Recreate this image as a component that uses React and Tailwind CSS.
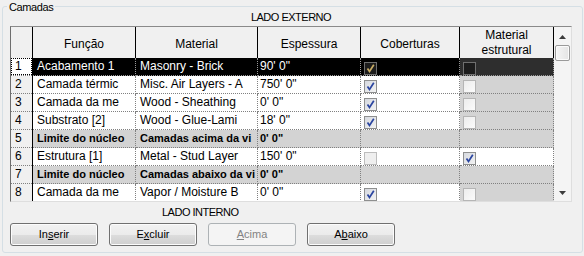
const rows = [
  { n: 1, fn: "Acabamento 1", mat: "Masonry - Brick", esp: `90' 0"`, cob: true, est: false, kind: "sel" },
  { n: 2, fn: "Camada térmic", mat: "Misc. Air Layers - A", esp: `750' 0"`, cob: true, est: false },
  { n: 3, fn: "Camada da me", mat: "Wood - Sheathing", esp: `0' 0"`, cob: true, est: false },
  { n: 4, fn: "Substrato [2]", mat: "Wood - Glue-Lami", esp: `18' 0"`, cob: true, est: false },
  { n: 5, fn: "Limite do núcleo", mat: "Camadas acima da vi", esp: `0' 0"`, kind: "core" },
  { n: 6, fn: "Estrutura [1]", mat: "Metal - Stud Layer", esp: `150' 0"`, cob: false, est: true, kind: "struct" },
  { n: 7, fn: "Limite do núcleo", mat: "Camadas abaixo da vi", esp: `0' 0"`, kind: "core" },
  { n: 8, fn: "Camada da me", mat: "Vapor / Moisture B", esp: `0' 0"`, cob: true, est: false },
];

function Check({ on, look }) {
  // look: normal | dim | sel
  const box =
    look === "sel"
      ? "border-[#6f6f6f] bg-[#1c1c1c]"
      : look === "dim"
      ? "border-[#bdbdbd] bg-[#efefef]"
      : on
      ? "border-[#8e8f8f] bg-[linear-gradient(135deg,#d6d9df,#f3f3f3)]"
      : "border-[#b5b5b5] bg-[linear-gradient(135deg,#ececec,#fbfbfb)]";
  return (
    <div className={`w-[13px] h-[13px] border ${box} flex items-center justify-center`}>
      {on && (
        <svg width="11" height="11" viewBox="0 0 11 11">
          <path d="M2.5 5.5 L4.5 8.5 L8.8 1.8" fill="none"
            stroke={look === "sel" ? "#c9ad66" : "#2a45a0"} strokeWidth="1.7" />
        </svg>
      )}
    </div>
  );
}

function Row({ r }) {
  const sel = r.kind === "sel";
  const core = r.kind === "core";
  const line = sel ? "border-[#9a9a9a]" : "border-[#808080]";
  const base = `h-[18px] border-r border-b border-dotted ${line} overflow-hidden whitespace-nowrap`;
  const cell = sel ? "bg-black text-white" : core ? "bg-[#d3d3d3]" : "bg-white";
  const txt = core ? "text-[11px] font-bold leading-[17px]" : "text-[12px] leading-[17px]";
  const estBg = sel ? "bg-[#2e2e2e]" : r.kind === "struct" ? "bg-white" : "bg-[#d3d3d3]";

  return (
    <div className="flex">
      <div className="w-[22px] border-r border-black flex">
        <div className={`flex-1 h-[18px] border-b border-dotted border-[#808080] ${sel ? "bg-white" : "bg-[#f0f0f0]"}`}>
          {sel ? (
            <div className="h-[17px] border border-dotted border-black pl-[3px] text-[12px] leading-[15px]">{r.n}</div>
          ) : (
            <div className="pl-[4px] text-[12px] leading-[17px]">{r.n}</div>
          )}
        </div>
      </div>
      <div className={`w-[103px] pl-[4px] ${base} ${cell} ${txt}`}>{r.fn}</div>
      <div className={`w-[122px] pl-[4px] ${base} ${cell} ${txt}`}>{r.mat}</div>
      <div className={`w-[103px] pl-[2px] ${base} ${cell} ${txt}`}>{r.esp}</div>
      <div className={`w-[99px] pl-[3px] pt-[4px] ${base} ${cell}`}>
        {!core && <Check on={r.cob} look={sel ? "sel" : r.cob ? "normal" : "dim"} />}
      </div>
      <div className={`w-[94px] pl-[3px] pt-[4px] ${base} ${core ? "bg-[#d3d3d3]" : estBg}`}>
        {!core && <Check on={r.est} look={sel ? "sel" : "normal"} />}
      </div>
    </div>
  );
}

function Btn({ children, disabled }) {
  return (
    <button
      className={`w-[88px] h-[23px] rounded-[3px] border text-[11px] leading-[13px] ${
        disabled
          ? "border-[#adb2b5] bg-[#f4f4f4] text-[#838383]"
          : "border-[#707070] bg-[linear-gradient(#f2f2f2,#ebebeb_50%,#dddddd_50%,#cfcfcf)] shadow-[inset_0_0_0_1px_#fcfcfc] text-black"
      }`}
    >
      {children}
    </button>
  );
}

export default function App() {
  return (
    <div className="w-[584px] h-[256px] bg-[#f0f0f0] pt-[6px] pl-[2px] font-['Liberation_Sans',Arial,sans-serif] text-black">
      <div className="relative w-[581px] h-[247px] border border-[#d5dfe5] rounded-[3px]">
        <span className="absolute left-[4px] top-[-6px] px-[2px] bg-[#f0f0f0] text-[11px] leading-[13px] tracking-[-0.4px]">
          Camadas
        </span>

        <div className="ml-[7px] w-[562px] pt-[4px] text-center text-[11px] leading-[13px] tracking-[-0.5px]">
          LADO EXTERNO
        </div>

        {/* grid */}
        <div className="ml-[7px] mt-[2px] w-[562px] h-[176px] flex border border-t-[#8a8a8a] border-l-[#6e6e6e] border-r-[#dedede] border-b-[#dedede] bg-white">
          <div className="w-[543px] flex flex-col">
            <div className="flex h-[31px] bg-[#f0f0f0] text-[12px]">
              <div className="w-[22px] border-r border-black" />
              <div className="w-[103px] border-r border-black flex items-center justify-center pt-[3px]">Função</div>
              <div className="w-[122px] border-r border-black flex items-center justify-center pt-[3px]">Material</div>
              <div className="w-[103px] border-r border-black flex items-center justify-center pt-[3px]">Espessura</div>
              <div className="w-[99px] border-r border-black flex items-center justify-center pt-[3px]">Coberturas</div>
              <div className="w-[94px] border-r border-black flex items-center justify-center text-center leading-[15px]">
                Material<br />estrutural
              </div>
            </div>
            <div className="h-[143px] overflow-hidden">
              {rows.map((r) => (
                <Row key={r.n} r={r} />
              ))}
            </div>
          </div>

          {/* scrollbar */}
          <div className="w-[17px] bg-[#f4f4f4] flex flex-col">
            <div className="h-[17px] flex items-center justify-center pt-[2px]">
              <svg width="7" height="4" viewBox="0 0 7 4">
                <path d="M0 4 L3.5 0 L7 4 Z" fill="#3c3c3c" />
              </svg>
            </div>
            <div className="ml-[1px] mt-[1px] w-[15px] h-[16px] rounded-[2px] border border-[#9a9a9a] bg-[linear-gradient(90deg,#f6f6f6,#e4e4e4)] shadow-[inset_0_0_0_1px_#fbfbfb]" />
            <div className="flex-1" />
            <div className="h-[17px] flex items-center justify-center pt-[1px]">
              <svg width="7" height="4" viewBox="0 0 7 4">
                <path d="M0 0 L7 0 L3.5 4 Z" fill="#3c3c3c" />
              </svg>
            </div>
          </div>
        </div>

        <div className="ml-[159px] mt-[4px] text-[11px] leading-[13px] tracking-[-0.5px]">LADO INTERNO</div>

        <div className="ml-[7px] mt-[4px] flex gap-[11px]">
          <Btn>
            In<span className="underline">s</span>erir
          </Btn>
          <Btn>
            E<span className="underline">x</span>cluir
          </Btn>
          <Btn disabled>
            <span className="underline">A</span>cima
          </Btn>
          <Btn>
            A<span className="underline">b</span>aixo
          </Btn>
        </div>
      </div>
    </div>
  );
}
